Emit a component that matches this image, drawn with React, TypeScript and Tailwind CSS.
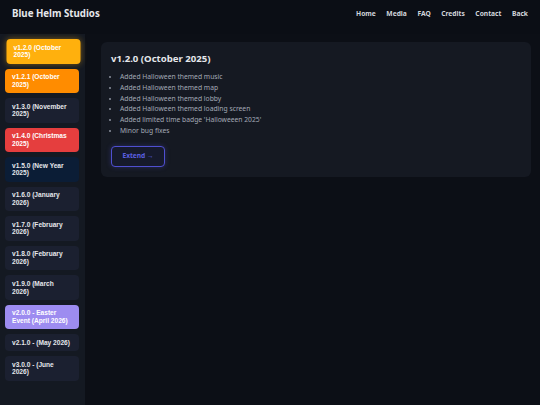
import { useState } from "react";

// Version list for the sidebar
const versions = [
  { id: "1.2.0", label: "v1.2.0 (October 2025)", tone: "bg-[#ffb00d] text-white" },
  { id: "1.2.1", label: "v1.2.1 (October 2025)", tone: "bg-[#ff8c00] text-white" },
  { id: "1.3.0", label: "v1.3.0 (November 2025)", tone: "bg-[#1b2030] text-[#e5e7eb]" },
  { id: "1.4.0", label: "v1.4.0 (Christmas 2025)", tone: "bg-[#e53e3e] text-white" },
  { id: "1.5.0", label: "v1.5.0 (New Year 2025)", tone: "bg-[#0b1d36] text-[#e5e7eb]" },
  { id: "1.6.0", label: "v1.6.0 (January 2026)", tone: "bg-[#1b2030] text-[#e5e7eb]" },
  { id: "1.7.0", label: "v1.7.0 (February 2026)", tone: "bg-[#1b2030] text-[#e5e7eb]" },
  { id: "1.8.0", label: "v1.8.0 (February 2026)", tone: "bg-[#1b2030] text-[#e5e7eb]" },
  { id: "1.9.0", label: "v1.9.0 (March 2026)", tone: "bg-[#1b2030] text-[#e5e7eb]" },
  { id: "2.0.0", label: "v2.0.0 - Easter Event (April 2026)", tone: "bg-[#9d8cf0] text-white" },
  { id: "2.1.0", label: "v2.1.0 - (May 2026)", tone: "bg-[#1b2030] text-[#e5e7eb]" },
  { id: "3.0.0", label: "v3.0.0 - (June 2026)", tone: "bg-[#1b2030] text-[#e5e7eb]" },
];

const changes = [
  "Added Halloween themed music",
  "Added Halloween themed map",
  "Added Halloween themed lobby",
  "Added Halloween themed loading screen",
  "Added limited time badge 'Halloweeen 2025'",
  "Minor bug fixes",
];

const navLinks = ["Home", "Media", "FAQ", "Credits", "Contact", "Back"];

export default function App() {
  const [active, setActive] = useState("1.2.0");

  return (
    <div className="min-h-screen flex flex-col bg-[#0c0f16] font-['Noto_Sans',sans-serif]">
      {/* Header */}
      <header className="h-[34px] flex items-center justify-between pl-3 pr-3 bg-[#0b0e15]">
        <h1 className="text-[9.7px] font-bold text-[#e5e7eb] -mt-[5px]">Blue Helm Studios</h1>
        <nav className="flex gap-[10.5px] -mt-[6px]">
          {navLinks.map((link) => (
            <a key={link} className="text-[6.7px] font-bold text-[#d1d5db]">
              {link}
            </a>
          ))}
        </nav>
      </header>

      <div className="flex-1 flex">
        {/* Sidebar */}
        <aside className="w-[85px] bg-[#141922] pl-[5px] pt-[5px] flex flex-col gap-[5px] font-['Liberation_Sans',Arial,sans-serif]">
          {versions.map((v) => {
            const isActive = v.id === active;
            return (
              <button
                key={v.id}
                onClick={() => setActive(v.id)}
                className={`w-[74px] text-left rounded-[4px] pl-[7px] pr-[8px] py-[4.5px] text-[6.6px] leading-[1.18] font-bold ${v.tone} ${
                  isActive ? "translate-x-[1.5px] shadow-[0_0_6px_rgba(255,176,13,0.45)]" : ""
                }`}
              >
                {v.label}
              </button>
            );
          })}
        </aside>

        {/* Main content */}
        <main className="flex-1 pl-4 pr-[9px] pt-[8px]">
          <div className="bg-[#151922] rounded-[6px] p-[10px]">
            <h2 className="text-[9.6px] font-bold text-[#e5e7eb] leading-[14px]">v1.2.0 (October 2025)</h2>
            <ul className="mt-[6px] list-disc pl-[9px] text-[6.75px] leading-[10.8px] text-[#a3a9b6] marker:text-[#8b919e]">
              {changes.map((c) => (
                <li key={c}>{c}</li>
              ))}
            </ul>
            <button className="mt-[9px] w-[54px] h-[21px] rounded-[4px] border border-[#4f4fd0] bg-[#161a2c] text-[6.6px] font-bold text-[#5b5fe0] shadow-[0_0_5px_rgba(79,79,208,0.35)]">
              Extend →
            </button>
          </div>
        </main>
      </div>
    </div>
  );
}
